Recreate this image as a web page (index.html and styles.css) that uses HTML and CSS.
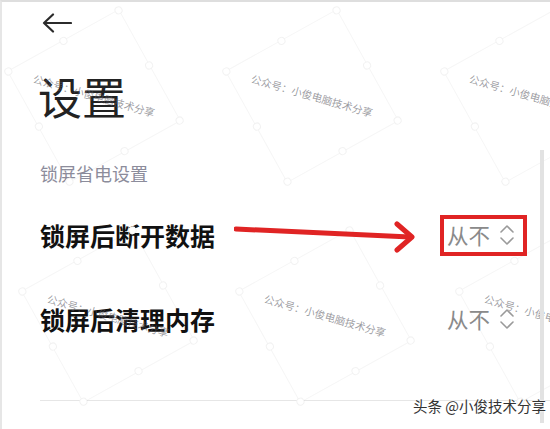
FILE: index.html
```html
<!DOCTYPE html>
<html lang="zh-CN">
<head>
    <meta charset="UTF-8">
    <meta name="viewport" content="width=device-width, initial-scale=1.0">
    <title>设置</title>
    <link rel="stylesheet" href="styles.css">
</head>
<body>
    <div class="screen">
        <!-- watermark tiles -->
        <div class="wm wm-a"><div class="wm-box"><i class="h h1"></i><i class="h h2"></i><i class="h h3"></i><i class="h h4"></i><i class="h h5"></i><i class="h h6"></i><i class="h h7"></i><i class="h h8"></i></div><span class="wm-text">公众号：小俊电脑技术分享</span></div>
        <div class="wm wm-b"><div class="wm-box"><i class="h h1"></i><i class="h h2"></i><i class="h h3"></i><i class="h h4"></i><i class="h h5"></i><i class="h h6"></i><i class="h h7"></i><i class="h h8"></i></div><span class="wm-text">公众号：小俊电脑技术分享</span></div>
        <div class="wm wm-c"><div class="wm-box"><i class="h h1"></i><i class="h h2"></i><i class="h h3"></i><i class="h h4"></i><i class="h h5"></i><i class="h h6"></i><i class="h h7"></i><i class="h h8"></i></div><span class="wm-text">公众号：小俊电脑技术分享</span></div>
        <div class="wm wm-d"><div class="wm-box"><i class="h h1"></i><i class="h h2"></i><i class="h h3"></i><i class="h h4"></i><i class="h h5"></i><i class="h h6"></i><i class="h h7"></i><i class="h h8"></i></div><span class="wm-text">公众号：小俊电脑技术分享</span></div>
        <div class="wm wm-e"><div class="wm-box"><i class="h h1"></i><i class="h h2"></i><i class="h h3"></i><i class="h h4"></i><i class="h h5"></i><i class="h h6"></i><i class="h h7"></i><i class="h h8"></i></div><span class="wm-text">公众号：小俊电脑技术分享</span></div>
        <div class="wm wm-f"><div class="wm-box"><i class="h h1"></i><i class="h h2"></i><i class="h h3"></i><i class="h h4"></i><i class="h h5"></i><i class="h h6"></i><i class="h h7"></i><i class="h h8"></i></div><span class="wm-text">公众号：小俊电脑技术分享</span></div>

        <div class="topbar">
            <svg class="back" width="30" height="20" viewBox="0 0 30 20">
                <path d="M2 10 H29 M11 1.5 L2 10 L11 18.5" fill="none" stroke="#2b2b2b" stroke-width="2.2" stroke-linecap="round" stroke-linejoin="round"/>
            </svg>
        </div>

        <h1 class="title">设置</h1>

        <div class="group-label">锁屏省电设置</div>

        <div class="rows">
            <div class="row">
                <span class="row-name">锁屏后断开数据</span>
                <span class="row-value">
                    从不
                    <svg class="updown" width="16" height="24" viewBox="0 0 16 24">
                        <path d="M2 9 L8 3 L14 9 M2 15 L8 21 L14 15" fill="none" stroke="#9a9a9a" stroke-width="1.6" stroke-linecap="round" stroke-linejoin="round"/>
                    </svg>
                    <span class="mark"></span>
                </span>
            </div>

            <div class="row">
                <span class="row-name">锁屏后清理内存</span>
                <span class="row-value">
                    从不
                    <svg class="updown" width="16" height="24" viewBox="0 0 16 24">
                        <path d="M2 9 L8 3 L14 9 M2 15 L8 21 L14 15" fill="none" stroke="#9a9a9a" stroke-width="1.6" stroke-linecap="round" stroke-linejoin="round"/>
                    </svg>
                </span>
            </div>
        </div>

        <div class="divider"></div>

        <svg class="arrow" width="190" height="36" viewBox="0 0 190 36">
            <path d="M2 8 L176 16" fill="none" stroke="#e02424" stroke-width="5" stroke-linecap="round"/>
            <path d="M163 3 L178 16 L163 29" fill="none" stroke="#e02424" stroke-width="5" stroke-linecap="round" stroke-linejoin="round"/>
        </svg>

        <div class="scrollbar"></div>

        <div class="credit">头条 @小俊技术分享</div>
    </div>
</body>
</html>
```

FILE: styles.css
```css
body {
    margin: 0;
    padding: 0;
    background-color: #fff;
}

.screen {
    position: relative;
    width: 550px;
    height: 429px;
    box-sizing: border-box;
    border-top: 2px solid #dedede;
    border-left: 2px solid #e6e6e6;
    overflow: hidden;
    background-color: #fff;
    font-family: "Noto Sans CJK SC", "Noto Sans", sans-serif;
    color: #1a1a1a;
}

.topbar {
    padding: 11px 0 0 40px;
}

.back {
    display: block;
}

.title {
    margin: 41px 0 0 36px;
    font-size: 44px;
    line-height: 44px;
    font-weight: 400;
    color: #222;
}

.group-label {
    margin: 46px 0 0 38px;
    font-size: 18px;
    line-height: 18px;
    color: #8c8c9b;
}

.rows {
    margin-top: 11px;
}

.row {
    display: flex;
    justify-content: space-between;
    align-items: center;
    padding: 0 35px 0 38px;
    height: 84px;
}

.row-name {
    font-size: 25px;
    line-height: 25px;
    font-weight: 700;
    color: #111;
}

.row-value {
    position: relative;
    display: flex;
    align-items: center;
    gap: 9px;
    font-size: 21.5px;
    line-height: 24px;
    color: #8a8a8a;
}

.updown {
    display: block;
}

.mark {
    position: absolute;
    left: -7px;
    right: -12px;
    top: -8px;
    bottom: -9px;
    border: 4px solid #e02424;
}

.divider {
    margin: 39px 0 0 38px;
    height: 1px;
    background-color: #e6e6e6;
}

/* annotation overlay */
.arrow {
    position: absolute;
    left: 232px;
    top: 219px;
}

.scrollbar {
    position: absolute;
    left: 538px;
    top: 148px;
    width: 4px;
    height: 273px;
    background-color: #e2e2e2;
}

.credit {
    position: absolute;
    left: 411px;
    top: 394px;
    font-size: 14.5px;
    line-height: 20px;
    color: #333;
    text-shadow: 0 0 2px #fff, 0 0 2px #fff;
}

/* watermark tiles */
.wm {
    position: absolute;
    width: 0;
    height: 0;
}

.wm-a { left: 92px; top: 94px; }
.wm-b { left: 310px; top: 94px; }
.wm-c { left: 528px; top: 94px; }
.wm-d { left: 106px; top: 314px; }
.wm-e { left: 323px; top: 314px; }
.wm-f { left: 543px; top: 314px; }

.wm-box {
    position: absolute;
    left: -64px;
    top: -64px;
    width: 128px;
    height: 128px;
    box-sizing: border-box;
    border: 1.5px solid rgba(0, 0, 0, 0.04);
    transform: rotate(-29deg);
}

.h {
    position: absolute;
    width: 6px;
    height: 6px;
    margin: -4px 0 0 -4px;
    border: 1px solid rgba(0, 0, 0, 0.05);
    border-radius: 50%;
    background-color: #fff;
}

.h1 { left: 0; top: 0; }
.h2 { left: 50%; top: 0; }
.h3 { left: 100%; top: 0; }
.h4 { left: 100%; top: 50%; }
.h5 { left: 100%; top: 100%; }
.h6 { left: 50%; top: 100%; }
.h7 { left: 0; top: 100%; }
.h8 { left: 0; top: 50%; }

.wm-text {
    position: absolute;
    left: -70px;
    top: -8px;
    width: 140px;
    text-align: center;
    font-size: 10.5px;
    line-height: 16px;
    white-space: nowrap;
    color: rgba(90, 90, 100, 0.6);
    transform: rotate(16deg);
}
```
